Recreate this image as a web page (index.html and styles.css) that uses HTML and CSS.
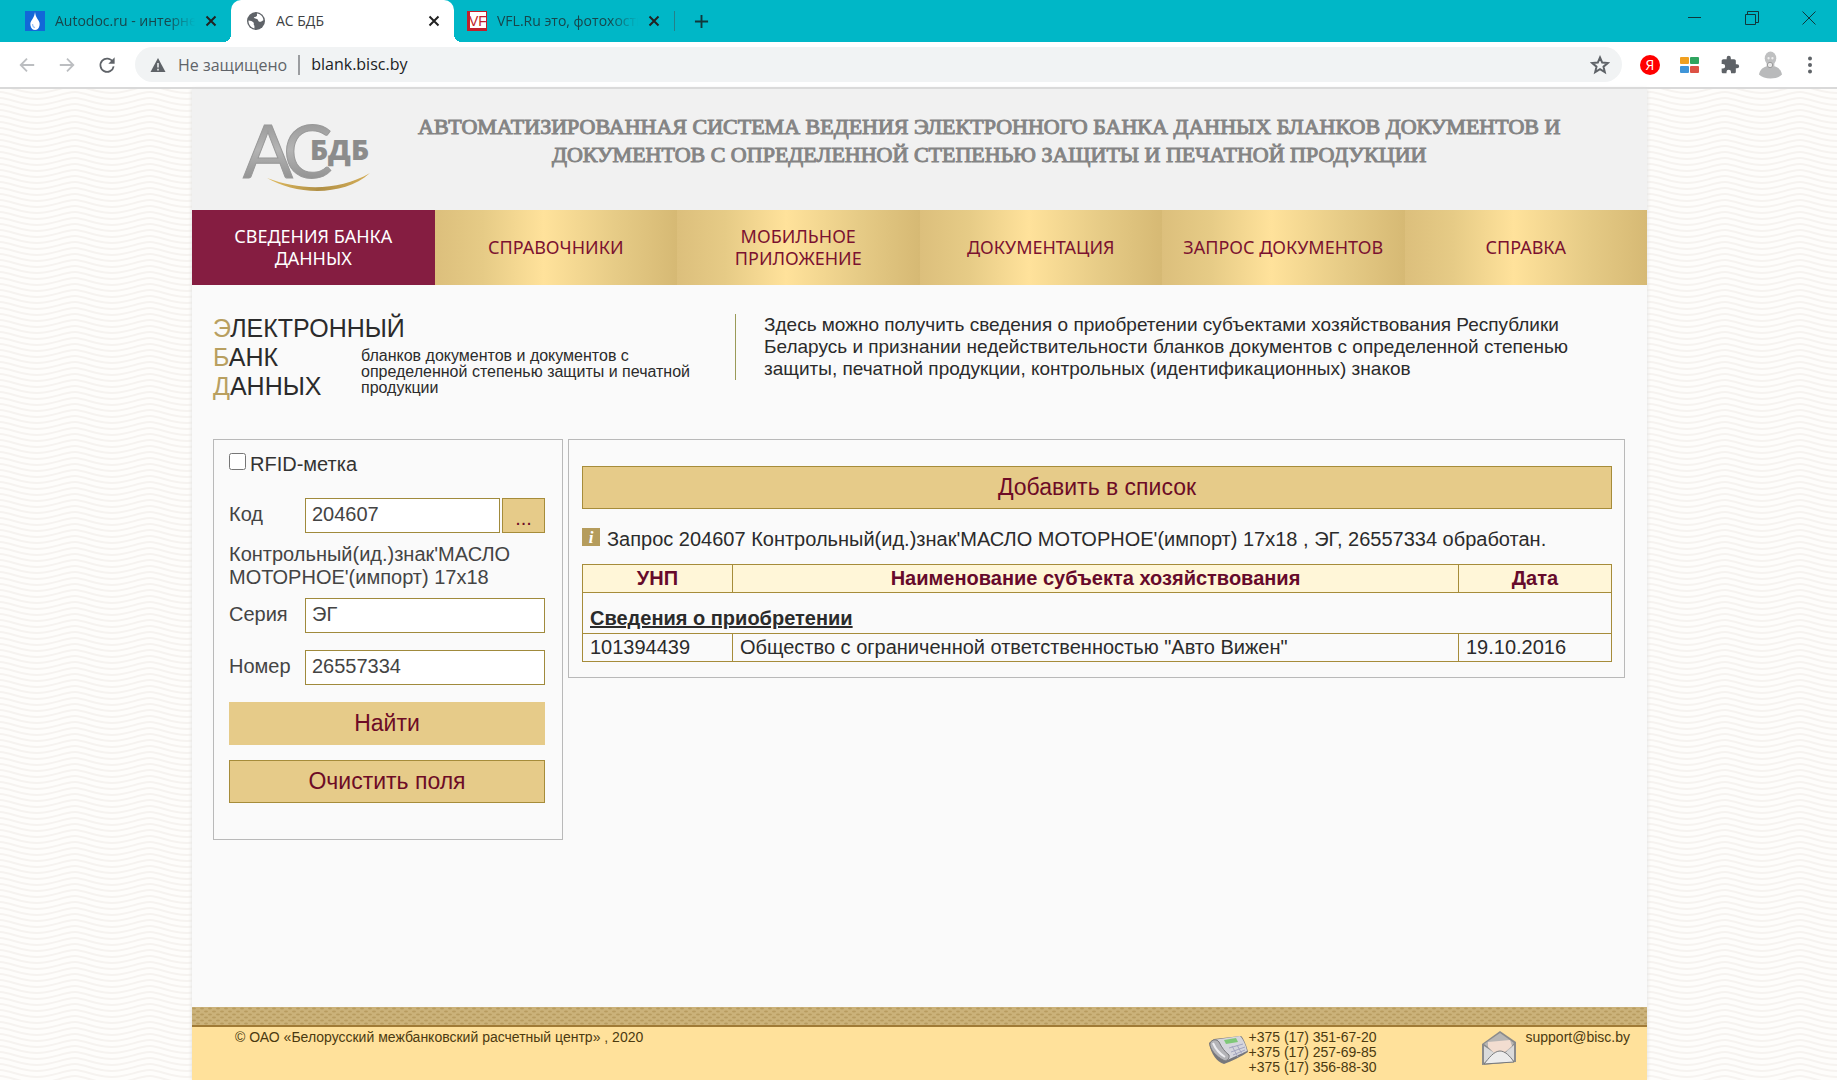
FILE: index.html
```html
<!DOCTYPE html>
<html lang="ru">
<head>
<meta charset="utf-8">
<title>АС БДБ</title>
<meta name="viewport" content="width=device-width, initial-scale=1">
<link rel="stylesheet" href="styles.css">
</head>
<body>
<div class="browser">
  <div class="tabstrip">
    <div class="tab tab-first">
      <svg class="favicon" viewBox="0 0 20 20" aria-hidden="true"><rect width="20" height="20" fill="#1268d8"/><path d="M10 1c.4 3 1 4.500 2.500 7 1.800 2.500 2.500 4 2 6.500C14 17.500 12 19 10 19s-4-1.500-4.500-4.500c-.5-2.500.2-4 2-6.500C9 5.500 9.600 4 10 1z" fill="#fff"/><path d="M7.500 13c0 2 1 3.300 2.500 3.800" stroke="#9cc4f5" stroke-width="1.200" fill="none"/></svg>
      <span class="tab-title fade">Autodoc.ru - интернет</span>
      <button class="tab-close" aria-label="Закрыть"><svg viewBox="0 0 12 12"><path d="M1.500 1.500l9 9M10.500 1.500l-9 9"/></svg></button>
    </div>
    <div class="tab tab-active">
      <svg class="favicon" viewBox="0 0 20 20" aria-hidden="true"><circle cx="10" cy="10" r="9" fill="#5f6368"/><path d="M2.500 9.500c2 .2 4 .8 5 2 .8 1-.3 1.800.6 2.800.6.7.3 1.700.3 3.200-3.500-.8-6.200-4-5.900-8zM11 2.600c-.4 1.200.6 1.500-.5 2.600-.9.900-2.300.5-2.600 1.600-.3 1.200 1.800.7 3 1.200 1.600.6 1 2.200 2.400 2.700 1.700.5 2.500-.5 4.100-1.500-.1-3.300-2.600-6.200-6.400-6.600z" fill="#fff"/></svg>
      <span class="tab-title">АС БДБ</span>
      <button class="tab-close" aria-label="Закрыть"><svg viewBox="0 0 12 12"><path d="M1.500 1.500l9 9M10.500 1.500l-9 9"/></svg></button>
    </div>
    <div class="tab tab-last">
      <svg class="favicon" viewBox="0 0 20 20" aria-hidden="true"><rect width="20" height="20" fill="#c21f2b"/><rect x="3" y="1" width="16" height="16" fill="#fff"/><text x="2" y="15" class="vf">VF</text></svg>
      <span class="tab-title fade">VFL.Ru это, фотохостинг</span>
      <button class="tab-close" aria-label="Закрыть"><svg viewBox="0 0 12 12"><path d="M1.500 1.500l9 9M10.500 1.500l-9 9"/></svg></button>
    </div>
    <button class="new-tab" aria-label="Новая вкладка"><svg viewBox="0 0 16 16"><path d="M8 1v14M1 8h14"/></svg></button>
    <div class="window-controls">
      <button aria-label="Свернуть"><svg viewBox="0 0 14 14"><path d="M0 6.500h13"/></svg></button>
      <button aria-label="Восстановить"><svg viewBox="0 0 14 14"><path d="M.5 3.500h10v10h-10zM2.500 3.500v-3h11v11h-3"/></svg></button>
      <button aria-label="Закрыть окно"><svg viewBox="0 0 14 14"><path d="M.5.5l13 13M13.500.5l-13 13"/></svg></button>
    </div>
  </div>
  <div class="toolbar">
    <button class="tool dim" aria-label="Назад"><svg viewBox="0 0 20 20"><path d="M18 10H3M10 3l-7 7 7 7"/></svg></button>
    <button class="tool dim" aria-label="Вперёд"><svg viewBox="0 0 20 20"><path d="M2 10h15M10 3l7 7-7 7"/></svg></button>
    <button class="tool" aria-label="Обновить"><svg viewBox="0 0 20 20"><path d="M16.500 6.500A7.400 7.400 0 1 0 17.400 11.500"/><path d="M18.500 1.500v7h-7z" fill="#5f6368" stroke="none"/></svg></button>
    <div class="omnibox">
      <svg class="warn" viewBox="0 0 16 16" aria-hidden="true"><path d="M8 1l7.500 14H.5z" fill="#5f6368"/><path d="M8 6v4.500M8 11.800v1.700" stroke="#f1f3f4" stroke-width="1.500"/></svg>
      <span class="insecure">Не защищено</span>
      <input class="url" type="text" aria-label="Адрес" value="blank.bisc.by">
      <button class="star" aria-label="Добавить в закладки"><svg viewBox="0 0 20 20"><path d="M10 2.500l2.200 5.100 5.500.5-4.200 3.600 1.300 5.400L10 14.200l-4.800 2.900 1.300-5.400-4.200-3.600 5.500-.5z"/></svg></button>
    </div>
    <div class="extensions">
      <button aria-label="Яндекс"><svg viewBox="0 0 20 20"><circle cx="10" cy="10" r="10" fill="#f00"/><text x="10" y="15" text-anchor="middle" class="ya">Я</text></svg></button>
      <button aria-label="Закладки"><svg viewBox="0 0 20 20"><rect x="0" y="2" width="9" height="7" rx="1" fill="#f0a020"/><rect x="10" y="2" width="9" height="7" rx="1" fill="#2fa45f"/><rect x="0" y="11" width="9" height="7" rx="1" fill="#3f95d8"/><rect x="10" y="11" width="9" height="7" rx="1" fill="#dd5245"/></svg></button>
      <button aria-label="Расширения"><svg viewBox="0 0 24 24"><path fill="#5f6368" d="M20.500 11H19V7c0-1.100-.9-2-2-2h-4V3.500a2.500 2.500 0 0 0-5 0V5H4c-1.100 0-2 .9-2 2v3.800h1.500a2.700 2.700 0 0 1 0 5.400H2V20c0 1.100.9 2 2 2h3.800v-1.500a2.700 2.700 0 0 1 5.400 0V22H17c1.100 0 2-.9 2-2v-4h1.500a2.500 2.500 0 0 0 0-5z"/></svg></button>
      <button class="avatar" aria-label="Профиль"><svg viewBox="0 0 26 28"><path d="M1 24c1-6 5-8 9-9h6c4 1 8 3 9 9-3 3-7 4-12 4S4 27 1 24z" fill="#b9babb"/><ellipse cx="13" cy="7" rx="6" ry="7" fill="#bfc0c1"/><path d="M9 9h8v7H9z" fill="#bfc0c1"/><circle cx="11" cy="7" r="1.200" fill="#eee"/><circle cx="15" cy="7" r="1.200" fill="#eee"/><circle cx="12.500" cy="14" r="2.800" fill="#e8e8e8" stroke="#999"/></svg></button>
      <button aria-label="Меню"><svg viewBox="0 0 20 20"><g fill="#5f6368"><circle cx="10" cy="3.500" r="2"/><circle cx="10" cy="10" r="2"/><circle cx="10" cy="16.500" r="2"/></g></svg></button>
    </div>
  </div>
</div>

<div class="page">
  <header class="header">
    <svg class="logo" viewBox="0 0 130 72" role="img" aria-label="АС БДБ">
      <defs>
        <linearGradient id="metal" x1="0" y1="0" x2="0" y2="1"><stop offset="0" stop-color="#8a8a8a"/><stop offset=".5" stop-color="#b4b4b4"/><stop offset="1" stop-color="#828282"/></linearGradient>
        <linearGradient id="gold" x1="0" y1="0" x2="1" y2="0"><stop offset="0" stop-color="#e2bd62"/><stop offset=".5" stop-color="#b08f45"/><stop offset="1" stop-color="#d5ae58"/></linearGradient>
      </defs>
      <text x="1" y="57" class="logo-big">А</text>
      <text x="41" y="57" class="logo-big">С</text>
      <rect x="69" y="17" width="60" height="28" fill="#f1f1f1"/>
      <text x="68" y="39" class="logo-small">БДБ</text>
      <path d="M25 57c34 13 72 13 103-5-28 25-76 21-103 5z" fill="url(#gold)"/>
    </svg>
    <h1 class="title">АВТОМАТИЗИРОВАННАЯ СИСТЕМА ВЕДЕНИЯ ЭЛЕКТРОННОГО БАНКА ДАННЫХ БЛАНКОВ ДОКУМЕНТОВ И<br>ДОКУМЕНТОВ С ОПРЕДЕЛЕННОЙ СТЕПЕНЬЮ ЗАЩИТЫ И ПЕЧАТНОЙ ПРОДУКЦИИ</h1>
  </header>
  <nav class="nav">
    <a href="#" class="current">СВЕДЕНИЯ БАНКА<br>ДАННЫХ</a>
    <a href="#">СПРАВОЧНИКИ</a>
    <a href="#">МОБИЛЬНОЕ<br>ПРИЛОЖЕНИЕ</a>
    <a href="#">ДОКУМЕНТАЦИЯ</a>
    <a href="#">ЗАПРОС ДОКУМЕНТОВ</a>
    <a href="#">СПРАВКА</a>
  </nav>
  <main class="main">
    <section class="intro">
      <h2 class="ebd"><span><b>Э</b>ЛЕКТРОННЫЙ</span><span><b>Б</b>АНК</span><span><b>Д</b>АННЫХ</span></h2>
      <p class="ebd-sub">бланков документов и документов с<br>определенной степенью защиты и печатной<br>продукции</p>
      <p class="about">Здесь можно получить сведения о приобретении субъектами хозяйствования Республики Беларусь и признании недействительности бланков документов с определенной степенью защиты, печатной продукции, контрольных (идентификационных) знаков</p>
    </section>
    <div class="columns">
      <form class="panel search">
        <label class="check"><input type="checkbox"><span>RFID-метка</span></label>
        <div class="field">
          <label for="code">Код</label>
          <input id="code" type="text" value="204607">
          <button type="button" class="btn more">...</button>
        </div>
        <p class="doc-type">Контрольный(ид.)знак'МАСЛО МОТОРНОЕ'(импорт) 17х18</p>
        <div class="field">
          <label for="series">Серия</label>
          <input id="series" type="text" value="ЭГ">
        </div>
        <div class="field">
          <label for="number">Номер</label>
          <input id="number" type="text" value="26557334">
        </div>
        <button type="button" class="btn plain">Найти</button>
        <button type="button" class="btn">Очистить поля</button>
      </form>
      <section class="panel results">
        <button type="button" class="btn">Добавить в список</button>
        <p class="status">
          <svg class="info" viewBox="0 0 18 18" aria-hidden="true"><rect width="18" height="18" fill="#b59c5c"/><text x="9" y="15" text-anchor="middle" class="info-i">i</text></svg>
          <span>Запрос 204607 Контрольный(ид.)знак'МАСЛО МОТОРНОЕ'(импорт) 17х18 , ЭГ, 26557334 обработан.</span>
        </p>
        <table class="data">
          <thead><tr><th class="col-id">УНП</th><th>Наименование субъекта хозяйствования</th><th class="col-date">Дата</th></tr></thead>
          <tbody>
            <tr class="group"><td colspan="3">Сведения о приобретении</td></tr>
            <tr><td>101394439</td><td>Общество с ограниченной ответственностью "Авто Вижен"</td><td>19.10.2016</td></tr>
          </tbody>
        </table>
      </section>
    </div>
  </main>
  <footer class="footer">
    <p class="copyright">© ОАО «Белорусский межбанковский расчетный центр» , 2020</p>
    <div class="phones">
      <svg viewBox="0 0 40 30" aria-hidden="true"><path d="M1 8l5-4L33 1c2 1 6 11 7 16-6 4-16 9-24 12C9 27 3 19 1 8z" fill="#77777b"/><path d="M5 5l27-4c3 3 6 9 7 15L17 26C11 23 6 14 5 5z" fill="#d5d5dc"/><path d="M16 5l12-2 2 4-12 2z" fill="#7fc878"/><path d="M21 13l14-4M23 17l14-5M25 20l12-5M24 11l6 11M29 10l5 9" stroke="#a4a6c0" fill="none"/><path d="M2 8c2-4 7-4 9-1 3 6 6 10 10 13 1 4-3 7-6 5C9 22 1 14 2 8z" fill="#b4b4b8" stroke="#77777b"/><path d="M5 8c3 7 7 11 12 14" stroke="#ececf0" stroke-width="2" fill="none"/></svg>
      <p>+375 (17) 351-67-20<br>+375 (17) 257-69-85<br>+375 (17) 356-88-30</p>
    </div>
    <div class="mail">
      <svg viewBox="0 0 36 36" aria-hidden="true"><path d="M1 14L19 1l16 11v20L1 35z" fill="#8b8b8b"/><path d="M3 14L19 3l14 10-6 8-13 1z" fill="#b8b6b4"/><path d="M7 12l22-2 2 6-7 6-11 1-6-6z" fill="#f2ddd0"/><path d="M3 16l12 8L3 33zM33 15l-9 8 9 8z" fill="#dadada"/><path d="M3 34c5-6 10-13 16-13 5 0 10 5 14 11z" fill="#ececec" stroke="#77797b"/></svg>
      <a href="mailto:support@bisc.by">support@bisc.by</a>
    </div>
  </footer>
</div>
</body>
</html>
```
FILE: styles.css
```css
* { box-sizing: border-box; }

body {
  margin: 0;
  min-height: 100vh;
  display: flex;
  flex-direction: column;
  color: #2b2b2b;
  font: 20px/23px "Liberation Sans", Arial, sans-serif;
  background: #fefdfb url("data:image/svg+xml,%3Csvg xmlns='http://www.w3.org/2000/svg' width='75' height='6'%3E%3Cpath d='M-2 -4C10 -4 20 3 37 3S62 -4 77 -4M-2 2C10 2 20 9 37 9S62 2 77 2M-2 -10C10 -10 20 -3 37 -3S62 -10 77 -10' fill='none' stroke='%23f6f3f0' stroke-width='2'/%3E%3C/svg%3E");
}

h1, h2, p { margin: 0; font-weight: normal; }
button { border: 0; padding: 0; background: none; font: inherit; color: inherit; }
svg { display: block; }
a { color: inherit; text-decoration: none; }

/* Browser frame */
.browser {
  font-family: "Open Sans", "Noto Sans", sans-serif;
  background: #fff;
  border-bottom: 2px solid #d9d9d9;
}
.tabstrip {
  display: flex;
  align-items: stretch;
  height: 42px;
  background: #00b7c7;
}
.tab {
  display: flex;
  align-items: center;
  gap: 10px;
  width: 223px;
  padding: 0 14px 0 13px;
  font-size: 14px;
  color: #17464c;
}
.tab-first { width: 231px; padding-left: 25px; }
.tab-last { width: 220px; }
.tab-active {
  position: relative;
  padding-left: 15px;
  color: #3c4043;
  background: #fff;
  border-radius: 10px 10px 0 0;
}
.tab-active::before, .tab-active::after {
  content: "";
  position: absolute;
  bottom: 0;
  width: 8px;
  height: 8px;
}
.tab-active::before { left: -8px; background: radial-gradient(circle at 0 0, transparent 8px, #fff 8px); }
.tab-active::after { right: -8px; background: radial-gradient(circle at 100% 0, transparent 8px, #fff 8px); }
.favicon { width: 20px; height: 20px; flex: none; }
.tab-title { flex: 1; padding-bottom: 2px; overflow: hidden; white-space: nowrap; }
.fade { mask-image: linear-gradient(to right, #000 80%, transparent); }
.tab-close svg { width: 12px; height: 12px; fill: none; stroke: #222; stroke-width: 2; }
.vf { font: 14px "Liberation Sans", sans-serif; fill: #c21f2b; }
.new-tab { padding: 0 19px; margin: 11px 0; border-left: 1px solid #24808a; }
.new-tab svg { width: 15px; height: 15px; fill: none; stroke: #10373b; stroke-width: 2; }
.window-controls { display: flex; margin-left: auto; padding-bottom: 6px; }
.window-controls button { width: 57px; display: grid; place-items: center; }
.window-controls svg { width: 14px; height: 14px; fill: none; stroke: #10373b; }

.toolbar {
  display: flex;
  align-items: center;
  height: 45px;
  padding-left: 7px;
}
.tool { width: 40px; display: grid; place-items: center; }
.tool svg { width: 18px; height: 18px; fill: none; stroke: #5f6368; stroke-width: 2; }
.dim svg { stroke: #bcbec1; }
.omnibox {
  flex: 1;
  display: flex;
  align-items: center;
  height: 35px;
  margin-left: 8px;
  padding: 0 12px 0 15px;
  border-radius: 18px;
  background: #f1f3f4;
  font-size: 16px;
}
.warn { width: 16px; height: 16px; margin-right: 12px; }
.insecure { color: #5f6368; padding-right: 11px; border-right: 2px solid #9b9da0; line-height: 20px; }
.url { flex: 1; border: 0; padding: 0 0 0 11px; background: none; font: inherit; color: #202124; }
.star svg { width: 20px; height: 20px; fill: none; stroke: #5f6368; stroke-width: 2; }
.extensions { display: flex; align-items: center; padding: 0 7px 0 8px; }
.extensions button { width: 40px; display: grid; place-items: center; }
.extensions svg { width: 20px; height: 20px; }
.extensions .avatar svg { width: 25px; height: 28px; }
.ya { font: 14px "Open Sans", sans-serif; fill: #fff; }

/* Site */
.page {
  flex: 1;
  display: flex;
  flex-direction: column;
  margin: 0 190px 0 192px;
  background: #fafafa;
  box-shadow: 0 0 4px #ddd;
}
.header {
  display: flex;
  min-height: 121px;
  padding: 24px 88px 0 50px;
  background: #f1f1f1;
}
.logo { width: 130px; height: 72px; margin-top: 8px; flex: none; overflow: visible; }
.logo-big { font: 74px Lato, sans-serif; fill: url(#metal); stroke: #999; stroke-width: 1px; }
.logo-small { font: 800 28px "Open Sans", sans-serif; fill: #8c8c8c; }
.title {
  flex: 1;
  margin-left: 46px;
  text-align: center;
  white-space: nowrap;
  color: #848484;
  font-family: "Liberation Serif", serif;
  font-size: 22px;
  line-height: 28px;
  -webkit-text-stroke: 1px #848484;
}
.nav { display: grid; grid-template-columns: repeat(6, 1fr); min-height: 75px; }
.nav a {
  display: grid;
  place-content: center;
  padding-bottom: 2px;
  text-align: center;
  color: #7b1230;
  font: 18px/22px "Noto Sans", sans-serif;
  background: linear-gradient(to right, #dcbf7c, #e6cb86 20%, #ffe29b 45%, #e6cb86 75%, #d6b974);
}
.nav .current { color: #fff; background: #851d41; }

.main { flex: 1; padding: 29px 22px 24px 21px; }
.intro { display: flex; }
.ebd { width: 148px; white-space: nowrap; font-size: 25px; line-height: 29px; }
.ebd span { display: block; }
.ebd b { font-weight: normal; color: #b89f60; }
.ebd-sub { width: 374px; padding-top: 34px; font-size: 16px; line-height: 16px; }
.about {
  flex: 1;
  align-self: flex-start;
  padding-left: 28px;
  padding-right: 50px;
  border-left: 1px solid #9a9a58;
  font-size: 19px;
  line-height: 22px;
}
.columns { display: flex; align-items: flex-start; gap: 5px; margin-top: 38px; }
.panel { border: 1px solid #b9b9b9; }
.search { width: 350px; padding: 13px 17px 36px 15px; color: #444; }
.check { display: flex; align-items: flex-start; gap: 4px; color: #333; }
.check input { width: 17px; height: 17px; margin: 0; }
.field { display: flex; gap: 2px; margin-bottom: 17px; }
.field label { width: 74px; padding-top: 5px; }
.field input {
  flex: 1;
  min-width: 0;
  height: 35px;
  padding: 0 6px 3px;
  border: 1px solid #a08a3c;
  background: #fff;
  color: #444;
  font: inherit;
}
.check + .field { margin: 22px 0 10px; }
.doc-type { margin-bottom: 9px; }
.btn {
  display: block;
  width: 100%;
  height: 43px;
  border: 1px solid #a68c3a;
  background: #e6cb89;
  color: #6d0c26;
  font-size: 23px;
}
.btn + .btn { margin-top: 15px; }
.plain { border-color: #e6cb89; }
.field .more { width: 43px; height: 35px; font-size: 20px; padding-top: 6px; }
.results { flex: 1; padding: 26px 12px 15px 13px; }
.status { display: flex; gap: 7px; align-items: flex-start; margin: 19px 0 13px; }
.info { width: 18px; height: 18px; flex: none; }
.info-i { font: italic bold 17px "Liberation Serif", serif; fill: #fff; }
.data { width: 100%; border-collapse: collapse; table-layout: fixed; }
.data th, .data td { height: 28px; padding: 0 7px; text-align: left; border: 1px solid #a68c3a; }
.data th { text-align: center; color: #660a2b; background: #fff6d8; }
.col-id { width: 150px; }
.col-date { width: 153px; }
.data .group td { height: 41px; padding-top: 11px; font-weight: bold; text-decoration: underline; }

/* A woven strip, a brown rule and a flat cream band */
.footer {
  display: flex;
  min-height: 73px;
  padding: 23px 17px 0 43px;
  color: #4b3a10;
  font-size: 14px;
  line-height: 15px;
  background-color: #cbb27a;
  background-image:
    linear-gradient(#a07a35, #a07a35),
    linear-gradient(#ffe19b, #ffe19b),
    url("data:image/svg+xml,%3Csvg xmlns='http://www.w3.org/2000/svg' width='8' height='6'%3E%3Cellipse cx='2' cy='1.500' rx='2' ry='1' fill='%23b89c60'/%3E%3Cellipse cx='6' cy='4.500' rx='2' ry='1' fill='%23b89c60'/%3E%3C/svg%3E");
  background-size: 100% 2px, 100% 100%, 8px 6px;
  background-position: 0 18px, 0 20px, 0 0;
  background-repeat: no-repeat, no-repeat, repeat;
}
.copyright { flex: 1; }
.phones, .mail { display: flex; }
.phones { width: 273px; gap: 1px; }
.phones svg { width: 40px; height: 30px; margin-top: 5px; }
.mail { gap: 9px; }
.mail svg { width: 36px; height: 36px; }
```
